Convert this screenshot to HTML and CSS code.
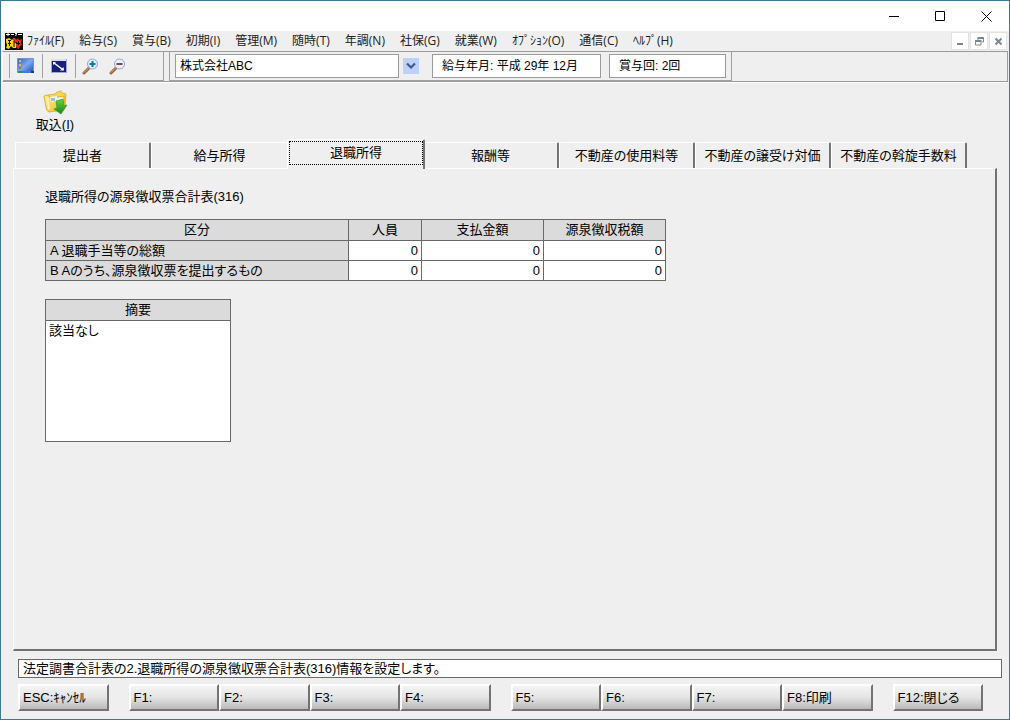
FILE: index.html
```html
<!DOCTYPE html>
<html lang="ja">
<head>
<meta charset="utf-8">
<title>退職所得の源泉徴収票合計表</title>
<link rel="stylesheet" href="styles.css">
</head>
<body>
<div class="window">
  <header class="titlebar">
    <button class="caption" type="button"><svg width="11" height="11" viewBox="0 0 11 11"><path d="M0 5.5h10"/></svg></button>
    <button class="caption" type="button"><svg width="11" height="11" viewBox="0 0 11 11"><path d="M.5.5h9v9h-9z"/></svg></button>
    <button class="caption" type="button"><svg width="11" height="11" viewBox="0 0 11 11"><path d="M.5.5l10 10M10.500.5l-10 10"/></svg></button>
  </header>

  <nav class="menubar">
    <svg class="app-icon" width="18" height="17" viewBox="0 0 18 17">
      <path fill="#080402" d="M0 0h18v17H0z"/>
      <path stroke="#fff" fill="none" d="M1 1.500h4M3 0v3M6 1.500h3M10 .5h2M10 2.500l2-1M13 1.500h4"/>
      <path fill="#ffd21c" d="M1 6l3-1 3 2 2-2 2 2-1 3 2 1-1 4H8l-2-2-2 3-3-1 1-3-1-3z"/>
      <path fill="#e52a0e" d="M8 6l2-1 1 2 2-2 1 2 3-1-1 4 1 2-2 1-1 3-2-1-1-3 1-3-3 1z"/>
      <path stroke="#080402" fill="none" d="M3 7.500h3M3 10.500h3M4.500 7v6M9 8v6M11 10.500h4M13.500 8v4"/>
    </svg>
    <button class="menu" type="button">ﾌｧｲﾙ(F)</button>
    <button class="menu" type="button">給与(S)</button>
    <button class="menu" type="button">賞与(B)</button>
    <button class="menu" type="button">初期(I)</button>
    <button class="menu" type="button">管理(M)</button>
    <button class="menu" type="button">随時(T)</button>
    <button class="menu" type="button">年調(N)</button>
    <button class="menu" type="button">社保(G)</button>
    <button class="menu" type="button">就業(W)</button>
    <button class="menu" type="button">ｵﾌﾟｼｮﾝ(O)</button>
    <button class="menu" type="button">通信(C)</button>
    <button class="menu" type="button">ﾍﾙﾌﾟ(H)</button>
    <div class="child-controls">
      <button class="child" type="button"><svg width="9" height="9" viewBox="0 0 9 9"><path fill="#7b8790" d="M1 6h6v2H1z"/></svg></button>
      <button class="child" type="button"><svg width="9" height="9" viewBox="0 0 9 9"><path fill="none" stroke="#7b8790" d="M3 3V1.500h5.500V5H7M.5 4.500H6V8H.5z"/><path fill="#7b8790" d="M2.500 0H9v2H2.500zM0 3h6.500v2H0z"/></svg></button>
      <button class="child" type="button"><svg width="9" height="9" viewBox="0 0 9 9"><path fill="none" stroke="#7b8790" stroke-width="2" d="M1.500 1.500l6 6M7.500 1.500l-6 6"/></svg></button>
    </div>
  </nav>

  <div class="toolbar">
    <div class="tools">
      <button class="tool boxed" type="button">
        <svg width="18" height="16" viewBox="0 0 18 16">
          <defs><linearGradient id="desk" x2="1" y2="1"><stop stop-color="#2a5fc2"/><stop offset=".5" stop-color="#7ea9ef"/><stop offset="1" stop-color="#1749ae"/></linearGradient></defs>
          <path fill="url(#desk)" stroke="#7592c9" d="M.5.5h16v14H.5z"/>
          <path fill="#d7ba62" d="M2 2h2v2H2zM2 6h2v2H2z"/><path fill="#c45c4a" d="M2 9h2v2H2z"/>
          <path fill="#2c9a3c" d="M1 13h4v2H1z"/><path fill="#4379d8" d="M5 13h9v2H5z"/><path fill="#123d8c" d="M14 13h3v2h-3z"/>
        </svg>
      </button>
      <button class="tool boxed" type="button">
        <svg width="16" height="14" viewBox="0 0 16 14">
          <path fill="#9fa6dc" d="M0 0h16v14H0z"/><path fill="#191e7d" d="M1 2h14v11H1z"/>
          <path fill="#d9def8" d="M0 0h15v2H0z"/>
          <path stroke="#fff" stroke-width="1.500" d="M3 4l8 6"/><path fill="#fff" d="M2 3h3L2 6zM13 11.500H9l3.500-3.500z"/>
        </svg>
      </button>
      <button class="tool" type="button">
        <svg width="17" height="17" viewBox="0 0 17 17">
          <path stroke="#9b603b" stroke-width="3" stroke-linecap="round" d="M2 15l5-5"/><path stroke="#e4a577" stroke-linecap="round" d="M2 14.500l5-5"/>
          <circle cx="10.500" cy="6" r="5" fill="#dff2ff" stroke="#8ea4d4"/>
          <path stroke="#1671a8" stroke-width="2" d="M7.500 6h6M10.500 3v6"/>
        </svg>
      </button>
      <button class="tool" type="button">
        <svg width="17" height="17" viewBox="0 0 17 17">
          <path stroke="#9b603b" stroke-width="3" stroke-linecap="round" d="M2 15l5-5"/><path stroke="#e4a577" stroke-linecap="round" d="M2 14.500l5-5"/>
          <circle cx="10.500" cy="6" r="5" fill="#e9f1ff" stroke="#8ea4d4"/>
          <path stroke="#913d3b" stroke-width="2" d="M7.500 6h6"/>
        </svg>
      </button>
    </div>
    <div class="fields">
      <select class="field company" aria-label="会社"><option>株式会社ABC</option></select>
      <span class="drop"><svg width="10" height="8" viewBox="0 0 10 8"><path fill="none" stroke="#40598c" stroke-width="2.200" d="M1 1.500l4 4 4-4"/></svg></span>
      <div class="field month">給与年月: 平成 29年 12月</div>
      <div class="field bonus">賞与回: 2回</div>
    </div>
  </div>

  <main class="content">
    <button class="import" type="button">
      <svg width="25" height="25" viewBox="0 0 25 25">
        <defs>
          <linearGradient id="folder" x2="1" y2="1"><stop stop-color="#fff0a0"/><stop offset="1" stop-color="#eeb513"/></linearGradient>
          <linearGradient id="arrow" x2="0" y2="1"><stop stop-color="#69d044"/><stop offset="1" stop-color="#18891d"/></linearGradient>
        </defs>
        <path fill="#f7d554" stroke="#e2b63c" d="M5 5l7-1 2-2 4-1 1 2 4 1-1 13-14 2z"/>
        <path fill="url(#folder)" stroke="#e6b32f" d="M1 6l4-1 2 3 15-2-1 14-15 2q-3-1-3-5z"/>
        <path fill="#eef7fb" d="M7 7l7-1v2l6-1v3L8 12z"/>
        <path fill="#8cc4e8" d="M8 8h4v3H8z"/>
        <path fill="#fff3b1" d="M3 8l2-1 2 12-2 1z"/>
        <path fill="url(#arrow)" stroke="#2f9a2b" stroke-width=".7" d="M13 11l7-2 1 7 3-1-6 9-7-5 3-1z"/>
      </svg>
      <span>取込(<u>I</u>)</span>
    </button>

    <div class="tabs" role="tablist">
      <button class="tab" role="tab" type="button">提出者</button>
      <button class="tab" role="tab" type="button">給与所得</button>
      <button class="tab selected" role="tab" type="button" aria-selected="true"><span class="focus">退職所得</span></button>
      <button class="tab" role="tab" type="button">報酬等</button>
      <button class="tab" role="tab" type="button">不動産の使用料等</button>
      <button class="tab" role="tab" type="button">不動産の譲受け対価</button>
      <button class="tab" role="tab" type="button">不動産の斡旋手数料</button>
    </div>

    <section class="panel">
      <h1 class="heading">退職所得の源泉徴収票合計表(316)</h1>
      <table class="totals">
        <thead>
          <tr><th class="kind">区分</th><th class="people" id="people">人員</th><th class="money" id="paid">支払金額</th><th class="money" id="tax">源泉徴収税額</th></tr>
        </thead>
        <tbody>
          <tr><th class="row-name" id="row-a">A 退職手当等の総額</th>
            <td><input value="0" aria-labelledby="row-a people"></td><td><input value="0" aria-labelledby="row-a paid"></td><td><input value="0" aria-labelledby="row-a tax"></td></tr>
          <tr><th class="row-name" id="row-b">B Aのうち、源泉徴収票を提出するもの</th>
            <td><input value="0" aria-labelledby="row-b people"></td><td><input value="0" aria-labelledby="row-b paid"></td><td><input value="0" aria-labelledby="row-b tax"></td></tr>
        </tbody>
      </table>
      <div class="summary">
        <label class="summary-title" for="summary">摘要</label>
        <textarea class="summary-text" id="summary" rows="6">該当なし</textarea>
      </div>
    </section>
  </main>

  <footer class="footer">
    <div class="status">法定調書合計表の2.退職所得の源泉徴収票合計表(316)情報を設定します。</div>
    <div class="keys">
      <button class="key" type="button">ESC:ｷｬﾝｾﾙ</button>
      <div class="key-group">
        <button class="key" type="button">F1:</button><button class="key" type="button">F2:</button><button class="key" type="button">F3:</button><button class="key" type="button">F4:</button>
      </div>
      <div class="key-group">
        <button class="key" type="button">F5:</button><button class="key" type="button">F6:</button><button class="key" type="button">F7:</button><button class="key" type="button">F8:印刷</button>
      </div>
      <button class="key" type="button">F12:閉じる</button>
    </div>
  </footer>
</div>
</body>
</html>
```
FILE: styles.css
```css
* { box-sizing: border-box; }

body {
  margin: 0;
  background: #efefef;
  color: #000;
  font: 13px/20px "Liberation Sans", "Noto Sans CJK JP", sans-serif;
  font-feature-settings: "palt";
}

button, input, select, textarea {
  margin: 0;
  padding: 0;
  border: 0;
  border-radius: 0;
  background: none;
  color: inherit;
  font: inherit;
  font-feature-settings: inherit;
}

svg { display: block; }

.window {
  display: flex;
  flex-direction: column;
  min-height: 100vh;
  border: 1px solid #3f7896;
}

.titlebar {
  display: flex;
  justify-content: flex-end;
  height: 30px;
  background: #fff;
}

.caption {
  display: grid;
  place-items: center;
  width: 46px;
}

.caption path {
  fill: none;
  stroke: #000;
}

.menubar {
  display: flex;
  align-items: center;
  gap: 15px;
  height: 20px;
  padding: 0 2px 0 4px;
  font: 12px/18px "Open Sans", "Noto Sans CJK JP", sans-serif;
  color: #222;
  white-space: nowrap;
}

.app-icon { margin-right: -11px; }

.child-controls {
  display: flex;
  gap: 1px;
  margin-left: auto;
}

.child {
  display: grid;
  place-items: center;
  width: 18px;
  height: 18px;
  border: 1px solid #e2e2e2;
  background: #fff;
}

.toolbar {
  display: flex;
  height: 31px;
  margin: 0 1px;
  border: 1px solid #9b9b9b;
  border-left-color: #fff;
  box-shadow: 0 1px #fff;
}

.tools, .fields {
  display: flex;
  align-items: center;
  border-right: 1px solid #a0a0a0;
  border-bottom: 1px solid #a0a0a0;
}

.tools {
  width: 161px;
  padding-left: 6px;
}

.tool {
  display: grid;
  place-items: center;
  width: 24px;
  height: 24px;
}

.boxed {
  width: 33px;
  border-left: 1px solid #a0a0a0;
}

.boxed + .tool:not(.boxed) {
  width: 30px;
  border-left: 1px solid #a0a0a0;
}

.fields {
  gap: 4px;
  margin-left: 5px;
  padding: 0 5px;
  border-left: 1px solid #a0a0a0;
}

.field {
  height: 24px;
  padding: 0 9px;
  border: 1px solid #9b9b9b;
  background: #fff;
  font-size: 12px;
  line-height: 22px;
  white-space: pre;
}

.company {
  width: 224px;
  padding: 0 4px;
  appearance: none;
}

.drop {
  display: grid;
  place-items: center;
  width: 16px;
  height: 16px;
  background: #bed0fa;
}

.month {
  width: 169px;
  margin-left: 9px;
}

.bonus {
  width: 117px;
  margin-left: 4px;
}

.content {
  display: flex;
  flex: 1;
  flex-direction: column;
  padding: 8px 12px 0;
}

.import {
  display: grid;
  justify-items: center;
  align-self: flex-start;
  width: 60px;
  margin-left: 12px;
  line-height: 20px;
}

.tabs {
  display: grid;
  grid-template-columns: repeat(7, 1fr);
  align-items: end;
  margin-top: 4px;
  padding: 0 30px 0 2px;
}

.tab {
  height: 26px;
  border: 1px solid #fff;
  border-right: 2px solid #737373;
  border-bottom: 0;
  border-radius: 2px 2px 0 0;
  line-height: 20px;
  white-space: nowrap;
}

.tab:has(+ .selected) { border-right: 0; }

.selected {
  z-index: 1;
  height: 30px;
  margin: 0 -2px -1px 0;
  padding: 1px 0 4px 1px;
  background: #efefef;
}

.focus {
  display: block;
  border: 1px dotted #000;
  line-height: 22px;
}

.panel {
  flex: 1;
  padding: 18px 31px;
  border: 1px solid #fff;
  border-right: 2px solid #737373;
  border-bottom: 2px solid #737373;
}

.heading {
  margin: 0 0 12px;
  font-size: 13px;
  font-weight: normal;
  line-height: 20px;
}

.totals {
  border-collapse: collapse;
  border: 1px solid #696969;
  line-height: 19px;
}

.totals th, .totals td {
  height: 20px;
  padding: 0;
  border: 1px solid #696969;
  background: #dbdbdb;
  font-weight: normal;
}

.totals thead { line-height: 20px; }

.totals td { background: #fff; }

.totals .row-name {
  padding-left: 4px;
  text-align: left;
}

.kind { width: 303px; }
.people { width: 73px; }
.money { width: 122px; }

.totals input {
  display: block;
  width: 100%;
  padding-right: 3px;
  text-align: right;
}

.summary {
  width: 186px;
  margin-top: 18px;
  border: 1px solid #696969;
}

.summary-title {
  display: block;
  border-bottom: 1px solid #696969;
  background: #dbdbdb;
  text-align: center;
}

.summary-text {
  display: block;
  width: 100%;
  padding: 0 3px;
  background: #fff;
  line-height: 20px;
  resize: none;
  overflow: hidden;
}

.footer { padding: 8px 7px 8px 17px; }

.status {
  height: 19px;
  padding: 0 4px;
  border: 1px solid #696969;
  background: #fff;
  line-height: 17px;
}

.keys {
  display: grid;
  grid-template-columns: 1fr 4fr 4fr 1fr;
  gap: 20px;
  margin-top: 6px;
  padding-right: 19px;
}

.key {
  min-width: 0;
  height: 27px;
  padding: 0 3px;
  border: 2px solid #fff;
  border-right-color: #737373;
  border-bottom-color: #737373;
  background: linear-gradient(#f4f4f4, #e4e4e4 50%, #b9b9b9);
  text-align: left;
  white-space: nowrap;
}

.key-group {
  display: grid;
  grid-template-columns: repeat(4, 1fr);
}
```
